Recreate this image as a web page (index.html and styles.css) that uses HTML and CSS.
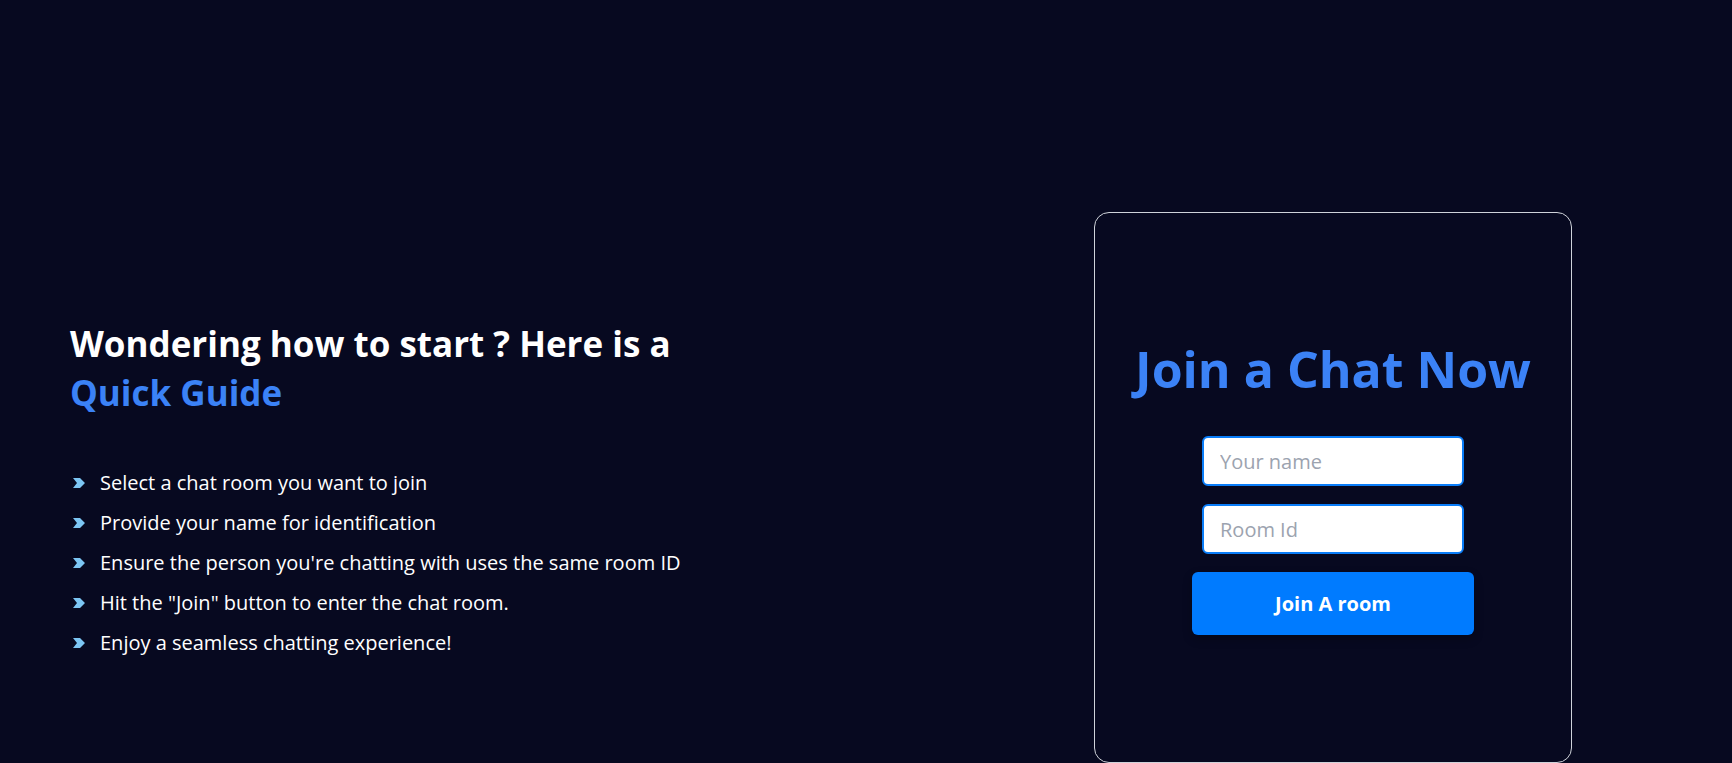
FILE: index.html
```html
<!DOCTYPE html>
<html lang="en">
<head>
<meta charset="utf-8">
<title>Join a Chat</title>
<link rel="stylesheet" href="styles.css">
</head>
<body>
<main class="page">
  <section class="guide">
    <h2 class="guide-title">Wondering how to start ? Here is a<br><span class="accent">Quick Guide</span></h2>
    <ul class="steps">
      <li class="step"><svg class="chev" viewBox="0 0 12 10" width="12" height="10"><polygon points="0,0 7,0 12,5 7,10 0,10 4,5"/></svg>Select a chat room you want to join</li>
      <li class="step"><svg class="chev" viewBox="0 0 12 10" width="12" height="10"><polygon points="0,0 7,0 12,5 7,10 0,10 4,5"/></svg>Provide your name for identification</li>
      <li class="step"><svg class="chev" viewBox="0 0 12 10" width="12" height="10"><polygon points="0,0 7,0 12,5 7,10 0,10 4,5"/></svg>Ensure the person you're chatting with uses the same room ID</li>
      <li class="step"><svg class="chev" viewBox="0 0 12 10" width="12" height="10"><polygon points="0,0 7,0 12,5 7,10 0,10 4,5"/></svg>Hit the "Join" button to enter the chat room.</li>
      <li class="step"><svg class="chev" viewBox="0 0 12 10" width="12" height="10"><polygon points="0,0 7,0 12,5 7,10 0,10 4,5"/></svg>Enjoy a seamless chatting experience!</li>
    </ul>
  </section>
  <section class="card">
    <h1 class="card-title">Join a Chat Now</h1>
    <form class="join-form">
      <input class="field" type="text" placeholder="Your name">
      <input class="field" type="text" placeholder="Room Id">
      <button class="join-btn" type="button">Join A room</button>
    </form>
  </section>
</main>
</body>
</html>
```
FILE: styles.css
```css
html, body {
  margin: 0;
  padding: 0;
  background: #070920;
  height: 100%;
  overflow: hidden;
}
body {
  font-family: "Open Sans", "Noto Sans", sans-serif;
  color: #ffffff;
}
.page {
  display: flex;
  justify-content: space-between;
  align-items: center;
  padding: 212px 160px 0 70px;
}
.guide {
  padding-top: 13px;
}
.guide-title {
  margin: 0;
  font-size: 35px;
  font-weight: 700;
  line-height: 49px;
  color: #ffffff;
}
.accent {
  color: #3b82f6;
}
.steps {
  list-style: none;
  margin: 52px 0 0;
  padding: 0;
}
.step {
  display: flex;
  align-items: center;
  font-size: 20px;
  line-height: 28px;
  margin-bottom: 12px;
}
.chev {
  fill: #7cc6f4;
  margin: 0 15px 0 3px;
  flex: none;
}
.card {
  box-sizing: border-box;
  width: 478px;
  height: 551px;
  border: 1px solid #cfd3da;
  border-radius: 15px;
  display: flex;
  flex-direction: column;
  align-items: center;
  justify-content: center;
  padding-bottom: 3px;
}
.card-title {
  margin: 0 0 35px;
  font-size: 50px;
  font-weight: 700;
  line-height: 64px;
  color: #3b82f6;
}
.join-form {
  display: flex;
  flex-direction: column;
  align-items: center;
}
.field {
  box-sizing: border-box;
  width: 262px;
  height: 50px;
  border: 2px solid #0a7df8;
  border-radius: 6px;
  background: #ffffff;
  padding: 0 16px;
  font-family: "Open Sans", "Noto Sans", sans-serif;
  font-size: 20px;
  color: #111827;
  margin-bottom: 18px;
  outline: none;
}
.field::placeholder {
  color: #9ca3af;
}
.join-btn {
  width: 282px;
  height: 63px;
  border: none;
  border-radius: 6px;
  background: #007bff;
  color: #ffffff;
  font-family: "Open Sans", "Noto Sans", sans-serif;
  font-size: 20px;
  font-weight: 700;
  box-shadow: 0 4px 10px rgba(0, 0, 0, 0.25);
}
```
